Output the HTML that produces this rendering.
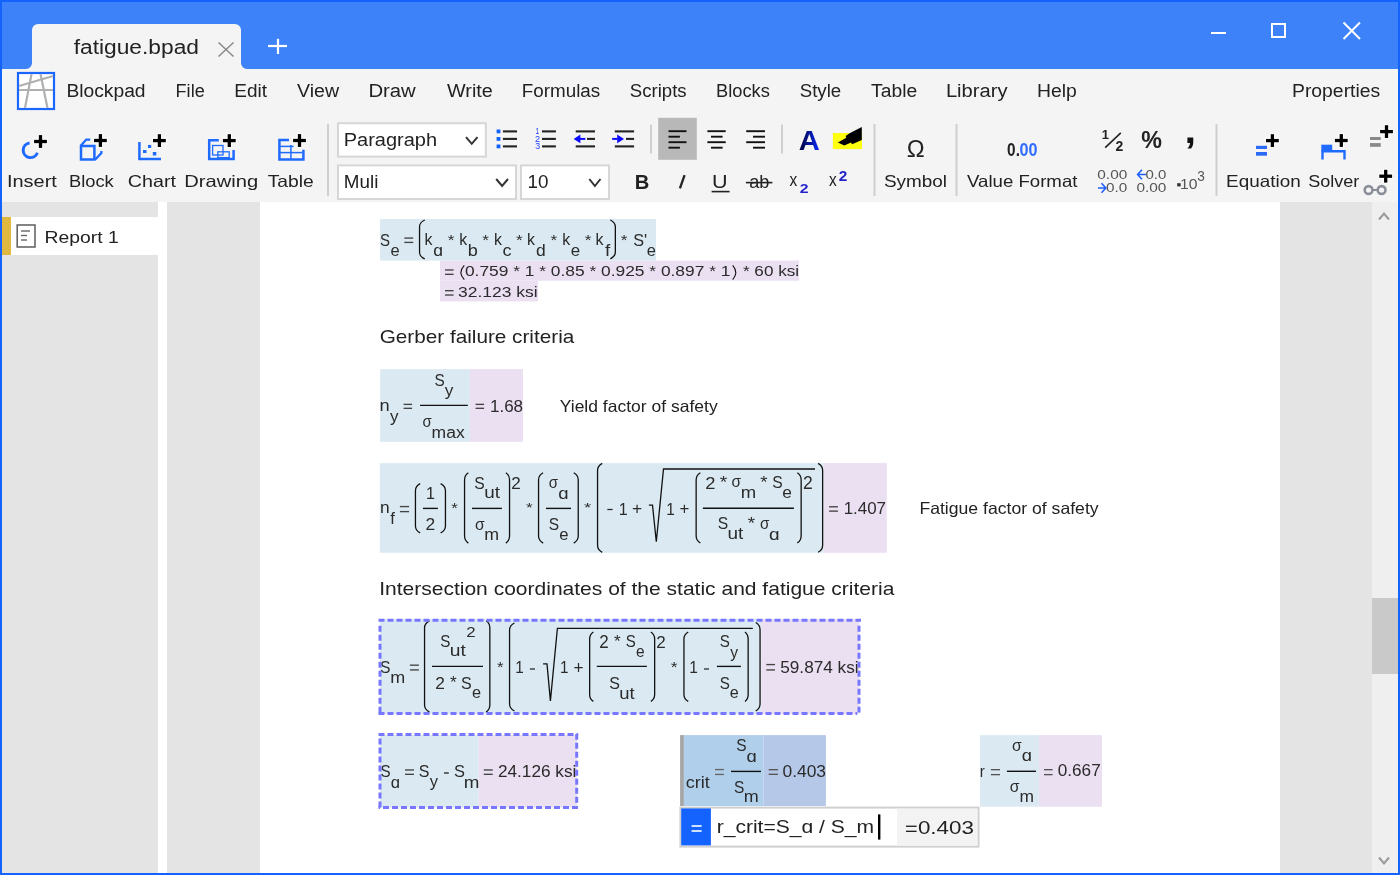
<!DOCTYPE html>
<html><head><meta charset="utf-8"><title>Blockpad - fatigue.bpad</title>
<style>html,body{margin:0;padding:0;width:1400px;height:875px;overflow:hidden;background:#f4f4f4}
svg{display:block;will-change:transform;font-family:"Liberation Sans",sans-serif}</style></head>
<body><svg width="1400" height="875" viewBox="0 0 1400 875" style="white-space:pre">
<rect x="0" y="0" width="1400" height="875" fill="#f4f4f4" />
<rect x="0" y="0" width="1400" height="69" fill="#3e82f9" />
<path d="M26,69 A6,6 0 0 0 32,63 L32,30 A6,6 0 0 1 38,24 L235,24 A6,6 0 0 1 241,30 L241,63 A6,6 0 0 0 247,69 Z" stroke="none" stroke-width="0" fill="#f4f4f4" />
<text x="73.70" y="54.3" font-size="20" fill="#222" textLength="125.28" lengthAdjust="spacingAndGlyphs">fatigue.bpad</text>
<line x1="218.5" y1="42.5" x2="233.5" y2="56.5" stroke="#8c8c8c" stroke-width="1.6" />
<line x1="233.5" y1="42.5" x2="218.5" y2="56.5" stroke="#8c8c8c" stroke-width="1.6" />
<line x1="268" y1="46" x2="287" y2="46" stroke="#fff" stroke-width="2.2" />
<line x1="278" y1="38.8" x2="278" y2="54" stroke="#fff" stroke-width="2.2" />
<line x1="1211" y1="33" x2="1226" y2="33" stroke="#fff" stroke-width="2" />
<rect x="1272" y="24" width="13" height="13" fill="none" stroke="#fff" stroke-width="2"/>
<line x1="1343.5" y1="22.5" x2="1360" y2="39" stroke="#fff" stroke-width="2" />
<line x1="1360" y1="22.5" x2="1343.5" y2="39" stroke="#fff" stroke-width="2" />
<rect x="17" y="72" width="38" height="38" fill="#fff" stroke="none"/>
<rect x="18" y="73" width="36" height="36" fill="none" stroke="#1a66ff" stroke-width="2.2"/>
<line x1="31.5" y1="74" x2="25" y2="108" stroke="#b0b0b0" stroke-width="2.2" />
<line x1="40.5" y1="74" x2="47.5" y2="108" stroke="#b0b0b0" stroke-width="2.2" />
<line x1="19" y1="86" x2="53" y2="76" stroke="#b0b0b0" stroke-width="2.2" />
<line x1="19" y1="90" x2="53" y2="90" stroke="#b0b0b0" stroke-width="2.2" />
<text x="66.40" y="97.1" font-size="18" fill="#222" textLength="79.18" lengthAdjust="spacingAndGlyphs">Blockpad</text>
<text x="175.59" y="97.1" font-size="18" fill="#222" textLength="29.15" lengthAdjust="spacingAndGlyphs">File</text>
<text x="234.22" y="97.1" font-size="18" fill="#222" textLength="32.72" lengthAdjust="spacingAndGlyphs">Edit</text>
<text x="297.00" y="97.1" font-size="18" fill="#222" textLength="42.16" lengthAdjust="spacingAndGlyphs">View</text>
<text x="368.42" y="97.1" font-size="18" fill="#222" textLength="47.34" lengthAdjust="spacingAndGlyphs">Draw</text>
<text x="447.00" y="97.1" font-size="18" fill="#222" textLength="45.80" lengthAdjust="spacingAndGlyphs">Write</text>
<text x="521.83" y="97.1" font-size="18" fill="#222" textLength="78.36" lengthAdjust="spacingAndGlyphs">Formulas</text>
<text x="629.82" y="97.1" font-size="18" fill="#222" textLength="56.86" lengthAdjust="spacingAndGlyphs">Scripts</text>
<text x="715.97" y="97.1" font-size="18" fill="#222" textLength="53.90" lengthAdjust="spacingAndGlyphs">Blocks</text>
<text x="799.72" y="97.1" font-size="18" fill="#222" textLength="41.44" lengthAdjust="spacingAndGlyphs">Style</text>
<text x="871.10" y="97.1" font-size="18" fill="#222" textLength="46.08" lengthAdjust="spacingAndGlyphs">Table</text>
<text x="945.93" y="97.1" font-size="18" fill="#222" textLength="61.57" lengthAdjust="spacingAndGlyphs">Library</text>
<text x="1036.99" y="97.1" font-size="18" fill="#222" textLength="39.80" lengthAdjust="spacingAndGlyphs">Help</text>
<text x="1291.99" y="97.1" font-size="18" fill="#222" textLength="88.22" lengthAdjust="spacingAndGlyphs">Properties</text>
<text x="6.94" y="186.8" font-size="16.5" fill="#222" textLength="49.99" lengthAdjust="spacingAndGlyphs">Insert</text>
<text x="68.97" y="186.8" font-size="16.5" fill="#222" textLength="44.74" lengthAdjust="spacingAndGlyphs">Block</text>
<text x="127.78" y="186.8" font-size="16.5" fill="#222" textLength="48.16" lengthAdjust="spacingAndGlyphs">Chart</text>
<text x="184.23" y="186.8" font-size="16.5" fill="#222" textLength="73.91" lengthAdjust="spacingAndGlyphs">Drawing</text>
<text x="267.70" y="186.8" font-size="16.5" fill="#222" textLength="46.08" lengthAdjust="spacingAndGlyphs">Table</text>
<text x="883.91" y="186.8" font-size="16.5" fill="#222" textLength="63.09" lengthAdjust="spacingAndGlyphs">Symbol</text>
<text x="967.00" y="186.8" font-size="16.5" fill="#222" textLength="110.44" lengthAdjust="spacingAndGlyphs">Value Format</text>
<text x="1226.12" y="186.8" font-size="16.5" fill="#222" textLength="74.54" lengthAdjust="spacingAndGlyphs">Equation</text>
<text x="1308.24" y="186.8" font-size="16.5" fill="#222" textLength="51.15" lengthAdjust="spacingAndGlyphs">Solver</text>
<line x1="328" y1="124" x2="328" y2="196" stroke="#cfcfcf" stroke-width="2" />
<line x1="874.5" y1="124" x2="874.5" y2="196" stroke="#cfcfcf" stroke-width="2" />
<line x1="956.5" y1="124" x2="956.5" y2="196" stroke="#cfcfcf" stroke-width="2" />
<line x1="1216.5" y1="124" x2="1216.5" y2="196" stroke="#cfcfcf" stroke-width="2" />
<line x1="651" y1="124.4" x2="651" y2="153.5" stroke="#cfcfcf" stroke-width="2" />
<line x1="782" y1="124.4" x2="782" y2="153.5" stroke="#cfcfcf" stroke-width="2" />
<rect x="0" y="202" width="1400" height="673" fill="#fff" />
<rect x="2" y="202" width="156" height="671" fill="#e4e4e4" />
<rect x="167" y="202" width="93" height="671" fill="#e4e4e4" />
<rect x="1280" y="202" width="92" height="671" fill="#e4e4e4" />
<rect x="1372" y="202" width="26" height="671" fill="#efefef" />
<rect x="1372" y="598" width="26" height="76" fill="#c9c9c9" />
<path d="M1379,219.5 L1384,213.5 L1389,219.5" stroke="#9a9a9a" stroke-width="2" fill="none" />
<path d="M1379,857.5 L1384,863.5 L1389,857.5" stroke="#9a9a9a" stroke-width="2" fill="none" />
<rect x="2" y="217" width="156" height="38" fill="#fff" />
<rect x="2" y="217" width="9" height="38" fill="#e0b840" />
<rect x="17.2" y="225" width="17.8" height="22" fill="none" stroke="#666" stroke-width="1.6"/>
<line x1="21" y1="231" x2="30" y2="231" stroke="#666" stroke-width="1.4" />
<line x1="21" y1="235.5" x2="27" y2="235.5" stroke="#666" stroke-width="1.4" />
<line x1="21" y1="240" x2="27" y2="240" stroke="#666" stroke-width="1.4" />
<text x="44.49" y="243.1" font-size="17" fill="#222" textLength="74.20" lengthAdjust="spacingAndGlyphs">Report 1</text>
<rect x="1" y="1" width="1398" height="873" fill="none" stroke="#1463ff" stroke-width="2"/>
<path d="M29.6,143.05 A7.3,7.3 0 1 0 37.36,152.8" stroke="#1f6bff" stroke-width="3" fill="none" />
<line x1="33.300000000000004" y1="141.5" x2="47.699999999999996" y2="141.5" stroke="#fff" stroke-width="5.699999999999999" stroke-opacity="0.85"/>
<line x1="40.5" y1="134.29999999999998" x2="40.5" y2="148.70000000000002" stroke="#fff" stroke-width="5.699999999999999" stroke-opacity="0.85"/>
<line x1="34.1" y1="141.5" x2="46.9" y2="141.5" stroke="#000" stroke-width="3.3" />
<line x1="40.5" y1="135.1" x2="40.5" y2="147.9" stroke="#000" stroke-width="3.3" />
<path d="M81,146 L81,159.6 L94.4,159.6 L94.4,146 Z" stroke="#1f6bff" stroke-width="2.5" fill="none" />
<path d="M80.8,145.8 L86.2,139.6 L90.2,139.6" stroke="#1f6bff" stroke-width="2.3" fill="none" />
<path d="M95,159.8 L101.4,153 L101.4,151" stroke="#1f6bff" stroke-width="2.3" fill="none" />
<line x1="93.2" y1="140.5" x2="107.60000000000001" y2="140.5" stroke="#fff" stroke-width="5.699999999999999" stroke-opacity="0.85"/>
<line x1="100.4" y1="133.29999999999998" x2="100.4" y2="147.70000000000002" stroke="#fff" stroke-width="5.699999999999999" stroke-opacity="0.85"/>
<line x1="94.0" y1="140.5" x2="106.80000000000001" y2="140.5" stroke="#000" stroke-width="3.3" />
<line x1="100.4" y1="134.1" x2="100.4" y2="146.9" stroke="#000" stroke-width="3.3" />
<path d="M139.4,142 L139.4,159 L161,159" stroke="#1f6bff" stroke-width="2.5" fill="none" />
<rect x="148" y="144.9" width="3.2" height="3.1" fill="#1f6bff" />
<rect x="143" y="150" width="3.5" height="3" fill="#1f6bff" />
<rect x="152.8" y="152" width="3.5" height="3.5" fill="#1f6bff" />
<line x1="152.2" y1="140.6" x2="166.60000000000002" y2="140.6" stroke="#fff" stroke-width="5.699999999999999" stroke-opacity="0.85"/>
<line x1="159.4" y1="133.39999999999998" x2="159.4" y2="147.8" stroke="#fff" stroke-width="5.699999999999999" stroke-opacity="0.85"/>
<line x1="153.0" y1="140.6" x2="165.8" y2="140.6" stroke="#000" stroke-width="3.3" />
<line x1="159.4" y1="134.2" x2="159.4" y2="147.0" stroke="#000" stroke-width="3.3" />
<path d="M218.8,140.2 L209.2,140.2 L209.2,159 L233.6,159 L233.6,150" stroke="#1f6bff" stroke-width="2.5" fill="none" />
<rect x="212.6" y="145.5" width="10.4" height="9.5" fill="none" stroke="#1f6bff" stroke-width="1.3"/>
<rect x="217.8" y="151.8" width="11.4" height="5.8" fill="none" stroke="#1f6bff" stroke-width="1.3"/>
<line x1="222.1" y1="140.6" x2="236.50000000000003" y2="140.6" stroke="#fff" stroke-width="5.699999999999999" stroke-opacity="0.85"/>
<line x1="229.3" y1="133.39999999999998" x2="229.3" y2="147.8" stroke="#fff" stroke-width="5.699999999999999" stroke-opacity="0.85"/>
<line x1="222.9" y1="140.6" x2="235.70000000000002" y2="140.6" stroke="#000" stroke-width="3.3" />
<line x1="229.3" y1="134.2" x2="229.3" y2="147.0" stroke="#000" stroke-width="3.3" />
<path d="M289,140 L279.4,140 L279.4,159.5 L303.4,159.5 L303.4,149.8" stroke="#1f6bff" stroke-width="2.5" fill="none" />
<line x1="280" y1="146.4" x2="293.6" y2="146.4" stroke="#1f6bff" stroke-width="1.5" />
<line x1="280" y1="152.6" x2="302" y2="152.6" stroke="#1f6bff" stroke-width="1.5" />
<line x1="290.9" y1="145" x2="290.9" y2="159" stroke="#1f6bff" stroke-width="1.5" />
<line x1="292.3" y1="140.5" x2="306.7" y2="140.5" stroke="#fff" stroke-width="5.699999999999999" stroke-opacity="0.85"/>
<line x1="299.5" y1="133.29999999999998" x2="299.5" y2="147.70000000000002" stroke="#fff" stroke-width="5.699999999999999" stroke-opacity="0.85"/>
<line x1="293.1" y1="140.5" x2="305.9" y2="140.5" stroke="#000" stroke-width="3.3" />
<line x1="299.5" y1="134.1" x2="299.5" y2="146.9" stroke="#000" stroke-width="3.3" />
<rect x="338" y="123.2" width="147.8" height="33.4" fill="#fff" stroke="#d6d6d6" stroke-width="2"/>
<rect x="338" y="165.4" width="178" height="33.6" fill="#fff" stroke="#d6d6d6" stroke-width="2"/>
<rect x="521" y="165.4" width="88" height="33.6" fill="#fff" stroke="#d6d6d6" stroke-width="2"/>
<path d="M466,137.2 L471.75,143.8 L477.5,137.2" stroke="#333" stroke-width="2" fill="none" />
<path d="M496.2,179 L502.1,186 L508,179" stroke="#333" stroke-width="2" fill="none" />
<path d="M589.3,179 L594.9,186 L600.5,179" stroke="#333" stroke-width="2" fill="none" />
<text x="343.74" y="145.8" font-size="17.5" fill="#222" textLength="93.39" lengthAdjust="spacingAndGlyphs">Paragraph</text>
<text x="343.83" y="188" font-size="17.5" fill="#222" textLength="34.51" lengthAdjust="spacingAndGlyphs">Muli</text>
<text x="527.52" y="188" font-size="17.5" fill="#222" textLength="20.95" lengthAdjust="spacingAndGlyphs">10</text>
<rect x="496.6" y="129.5" width="3.8" height="3.8" fill="#1060ff" />
<line x1="502.9" y1="131.4" x2="517" y2="131.4" stroke="#222" stroke-width="2.1" />
<line x1="542" y1="131.4" x2="555.9" y2="131.4" stroke="#222" stroke-width="2.1" />
<rect x="496.6" y="137.0" width="3.8" height="3.8" fill="#1060ff" />
<line x1="502.9" y1="138.9" x2="517" y2="138.9" stroke="#222" stroke-width="2.1" />
<line x1="542" y1="138.9" x2="555.9" y2="138.9" stroke="#222" stroke-width="2.1" />
<rect x="496.6" y="144.5" width="3.8" height="3.8" fill="#1060ff" />
<line x1="502.9" y1="146.4" x2="517" y2="146.4" stroke="#222" stroke-width="2.1" />
<line x1="542" y1="146.4" x2="555.9" y2="146.4" stroke="#222" stroke-width="2.1" />
<text x="535.39" y="134.2" font-size="9.39" fill="#2040ff" textLength="3.68" lengthAdjust="spacingAndGlyphs">1</text>
<text x="535.07" y="142.2" font-size="9.67" fill="#2040ff" textLength="5.10" lengthAdjust="spacingAndGlyphs">2</text>
<text x="535.22" y="149.46" font-size="9.18" fill="#2040ff" textLength="4.94" lengthAdjust="spacingAndGlyphs">3</text>
<line x1="575.7" y1="131.4" x2="595" y2="131.4" stroke="#222" stroke-width="2.1" />
<line x1="587" y1="138.9" x2="595" y2="138.9" stroke="#222" stroke-width="2.1" />
<line x1="575.7" y1="146.4" x2="595" y2="146.4" stroke="#222" stroke-width="2.1" />
<path d="M573.6,138.9 L580.4,134.6 L580.4,143.2 Z" stroke="none" stroke-width="0" fill="#0a0aff" />
<line x1="580" y1="138.9" x2="585.4" y2="138.9" stroke="#0a0aff" stroke-width="2" />
<line x1="614.8" y1="131.4" x2="634.1" y2="131.4" stroke="#222" stroke-width="2.1" />
<line x1="626" y1="138.9" x2="634.1" y2="138.9" stroke="#222" stroke-width="2.1" />
<line x1="614.8" y1="146.4" x2="634.1" y2="146.4" stroke="#222" stroke-width="2.1" />
<path d="M624,138.9 L617.2,134.6 L617.2,143.2 Z" stroke="none" stroke-width="0" fill="#0a0aff" />
<line x1="612.2" y1="138.9" x2="617.5" y2="138.9" stroke="#0a0aff" stroke-width="2" />
<rect x="658.2" y="117.8" width="38.6" height="42.0" fill="#b8b8b8" />
<line x1="668.5" y1="131.2" x2="686.5" y2="131.2" stroke="#111" stroke-width="1.9" />
<line x1="707.4" y1="131.2" x2="725.7" y2="131.2" stroke="#111" stroke-width="1.9" />
<line x1="746.2" y1="131.2" x2="765" y2="131.2" stroke="#111" stroke-width="1.9" />
<line x1="668.5" y1="136.7" x2="679.9" y2="136.7" stroke="#111" stroke-width="1.9" />
<line x1="711" y1="136.7" x2="722.6" y2="136.7" stroke="#111" stroke-width="1.9" />
<line x1="753" y1="136.7" x2="765" y2="136.7" stroke="#111" stroke-width="1.9" />
<line x1="668.5" y1="142.2" x2="686.5" y2="142.2" stroke="#111" stroke-width="1.9" />
<line x1="707.4" y1="142.2" x2="725.7" y2="142.2" stroke="#111" stroke-width="1.9" />
<line x1="746.2" y1="142.2" x2="765" y2="142.2" stroke="#111" stroke-width="1.9" />
<line x1="668.5" y1="147.7" x2="679.9" y2="147.7" stroke="#111" stroke-width="1.9" />
<line x1="711" y1="147.7" x2="722.6" y2="147.7" stroke="#111" stroke-width="1.9" />
<line x1="753" y1="147.7" x2="765" y2="147.7" stroke="#111" stroke-width="1.9" />
<defs><linearGradient id="ga" x1="0" x2="1" y1="0" y2="0"><stop offset="0" stop-color="#000033"/><stop offset="1" stop-color="#0a2cff"/></linearGradient></defs>
<text x="798.84" y="149.9" font-size="27.31" fill="url(#ga)" font-weight="bold" textLength="21.11" lengthAdjust="spacingAndGlyphs">A</text>
<rect x="832.9" y="133" width="29.1" height="16.1" fill="#ffff10" />
<path d="M861.8,127.1 L861.8,139.9 L852.1,144.3 L851,142.5 L844.3,145.4 L837.9,142.5 L846.3,137.7 L845.6,135.9 L849.6,133.3 Z" stroke="none" stroke-width="0" fill="#000" />
<text x="634.84" y="188.6" font-size="19.48" fill="#222" font-weight="bold" textLength="14.56" lengthAdjust="spacingAndGlyphs">B</text>
<line x1="684.6" y1="175.2" x2="679.9" y2="188.4" stroke="#222" stroke-width="2.3" />
<text x="711.95" y="188.3" font-size="19.06" fill="#222" textLength="15.57" lengthAdjust="spacingAndGlyphs">U</text>
<line x1="711.6" y1="191.6" x2="729.6" y2="191.6" stroke="#222" stroke-width="1.6" />
<text x="749.23" y="188.31" font-size="18.27" fill="#222" textLength="20.20" lengthAdjust="spacingAndGlyphs">ab</text>
<line x1="745.9" y1="182.6" x2="772.4" y2="182.6" stroke="#222" stroke-width="1.6" />
<text x="789.60" y="186.0" font-size="17.69" fill="#222" textLength="7.70" lengthAdjust="spacingAndGlyphs">x</text>
<text x="799.71" y="192.9" font-size="13.51" fill="#2222cc" font-weight="bold" textLength="8.79" lengthAdjust="spacingAndGlyphs">2</text>
<text x="829.00" y="186.0" font-size="17.69" fill="#222" textLength="7.70" lengthAdjust="spacingAndGlyphs">x</text>
<text x="838.82" y="181.2" font-size="13.94" fill="#2222cc" font-weight="bold" textLength="8.56" lengthAdjust="spacingAndGlyphs">2</text>
<text x="906.85" y="157.2" font-size="24.32" fill="#222" textLength="17.94" lengthAdjust="spacingAndGlyphs">Ω</text>
<text x="1007.12" y="156.22" font-size="18.09" fill="#222" font-weight="bold" textLength="12.78" lengthAdjust="spacingAndGlyphs">0.</text>
<text x="1019.60" y="156.22" font-size="18.09" fill="#2f6bff" font-weight="bold" textLength="17.96" lengthAdjust="spacingAndGlyphs">00</text>
<text x="1101.79" y="138.9" font-size="13.51" fill="#222" font-weight="bold" textLength="7.24" lengthAdjust="spacingAndGlyphs">1</text>
<line x1="1105.2" y1="147.6" x2="1120.8" y2="132.9" stroke="#222" stroke-width="1.6" />
<text x="1115.56" y="150.6" font-size="14.08" fill="#222" font-weight="bold" textLength="7.79" lengthAdjust="spacingAndGlyphs">2</text>
<text x="1141.24" y="147.62" font-size="24.07" fill="#222" font-weight="bold" textLength="20.69" lengthAdjust="spacingAndGlyphs">%</text>
<text x="1184.60" y="143.05" font-size="37.44" fill="#111" font-weight="bold" textLength="11.56" lengthAdjust="spacingAndGlyphs">,</text>
<text x="1097.32" y="178.71" font-size="12.1" fill="#555" textLength="29.96" lengthAdjust="spacingAndGlyphs">0.00</text>
<text x="1106.02" y="192.1" font-size="12.66" fill="#555" textLength="21.26" lengthAdjust="spacingAndGlyphs">0.0</text>
<path d="M1098,188 L1105.5,188 M1101.5,183.3 L1105.8,188 L1101.5,192.7" stroke="#2060ff" stroke-width="1.6" fill="none" />
<text x="1145.53" y="178.71" font-size="12.1" fill="#555" textLength="20.84" lengthAdjust="spacingAndGlyphs">0.0</text>
<text x="1136.42" y="192.1" font-size="12.66" fill="#555" textLength="29.96" lengthAdjust="spacingAndGlyphs">0.00</text>
<path d="M1146,174.5 L1138,174.5 M1142,169.8 L1137.6,174.5 L1142,179.2" stroke="#2060ff" stroke-width="1.6" fill="none" />
<rect x="1177.2" y="183.2" width="3.5" height="3.2" fill="#333" />
<text x="1180.12" y="189.06" font-size="15.17" fill="#555" textLength="17.47" lengthAdjust="spacingAndGlyphs">10</text>
<text x="1197.17" y="180.78" font-size="13.91" fill="#555" textLength="7.58" lengthAdjust="spacingAndGlyphs">3</text>
<rect x="1256" y="145.8" width="11" height="3.2" fill="#2a6af5" />
<rect x="1256" y="152" width="11" height="3.7" fill="#2a6af5" />
<line x1="1265.2" y1="140.6" x2="1279.6000000000001" y2="140.6" stroke="#fff" stroke-width="5.699999999999999" stroke-opacity="0.85"/>
<line x1="1272.4" y1="133.39999999999998" x2="1272.4" y2="147.8" stroke="#fff" stroke-width="5.699999999999999" stroke-opacity="0.85"/>
<line x1="1266.0" y1="140.6" x2="1278.8000000000002" y2="140.6" stroke="#000" stroke-width="3.3" />
<line x1="1272.4" y1="134.2" x2="1272.4" y2="147.0" stroke="#000" stroke-width="3.3" />
<rect x="1321.3" y="144.7" width="10.9" height="6.8" fill="#1f6bff" />
<path d="M1322.5,159.4 L1322.5,151.2 L1344.5,151.2 L1344.5,159.4" stroke="#1f6bff" stroke-width="2.4" fill="none" />
<line x1="1334.1" y1="140.5" x2="1348.5" y2="140.5" stroke="#fff" stroke-width="5.699999999999999" stroke-opacity="0.85"/>
<line x1="1341.3" y1="133.29999999999998" x2="1341.3" y2="147.70000000000002" stroke="#fff" stroke-width="5.699999999999999" stroke-opacity="0.85"/>
<line x1="1334.8999999999999" y1="140.5" x2="1347.7" y2="140.5" stroke="#000" stroke-width="3.3" />
<line x1="1341.3" y1="134.1" x2="1341.3" y2="146.9" stroke="#000" stroke-width="3.3" />
<rect x="1370" y="137" width="10.7" height="3" fill="#888" />
<rect x="1370" y="143.1" width="10.7" height="3.7" fill="#888" />
<line x1="1379.3" y1="131.6" x2="1393.7" y2="131.6" stroke="#fff" stroke-width="5.699999999999999" stroke-opacity="0.85"/>
<line x1="1386.5" y1="124.39999999999999" x2="1386.5" y2="138.8" stroke="#fff" stroke-width="5.699999999999999" stroke-opacity="0.85"/>
<line x1="1380.1" y1="131.6" x2="1392.9" y2="131.6" stroke="#000" stroke-width="3.3" />
<line x1="1386.5" y1="125.19999999999999" x2="1386.5" y2="138.0" stroke="#000" stroke-width="3.3" />
<circle cx="1368.6" cy="190" r="3.9" fill="none" stroke="#8a8f99" stroke-width="2.6"/><circle cx="1381.6" cy="190" r="3.9" fill="none" stroke="#8a8f99" stroke-width="2.6"/>
<line x1="1372.5" y1="190" x2="1378" y2="190" stroke="#8a8f99" stroke-width="2" />
<line x1="1378.5" y1="176.2" x2="1392.9" y2="176.2" stroke="#fff" stroke-width="5.699999999999999" stroke-opacity="0.85"/>
<line x1="1385.7" y1="168.99999999999997" x2="1385.7" y2="183.4" stroke="#fff" stroke-width="5.699999999999999" stroke-opacity="0.85"/>
<line x1="1379.3" y1="176.2" x2="1392.1000000000001" y2="176.2" stroke="#000" stroke-width="3.3" />
<line x1="1385.7" y1="169.79999999999998" x2="1385.7" y2="182.6" stroke="#000" stroke-width="3.3" />
<rect x="380" y="219" width="276" height="41.6" fill="#dbeaf2" />
<rect x="440" y="260.6" width="359" height="20.1" fill="#ebdff2" />
<rect x="440" y="280.7" width="98" height="20.7" fill="#ebdff2" />
<text x="380.03" y="245.6" font-size="16.5" fill="#2b2b2b" textLength="10.00" lengthAdjust="spacingAndGlyphs">S</text>
<text x="390.48" y="256.45" font-size="16" fill="#2b2b2b" textLength="9.19" lengthAdjust="spacingAndGlyphs">e</text>
<rect x="404.3" y="237.4" width="8.9" height="1.35" fill="#444" />
<rect x="404.3" y="241.75" width="8.9" height="1.35" fill="#444" />
<path d="M424.75,220 C419.54999999999995,222.45 419.54999999999995,224.9 419.54999999999995,227 L419.54999999999995,251.89999999999998 C419.54999999999995,253.99999999999997 419.54999999999995,256.45 424.75,258.9" stroke="#111" stroke-width="1.3" fill="none" />
<text x="424.41" y="245.15" font-size="16" fill="#2b2b2b" textLength="7.94" lengthAdjust="spacingAndGlyphs">k</text>
<text x="433.25" y="255.7" font-size="16" fill="#2b2b2b" textLength="9.73" lengthAdjust="spacingAndGlyphs">ɑ</text>
<text x="459.31" y="245.15" font-size="16" fill="#2b2b2b" textLength="7.94" lengthAdjust="spacingAndGlyphs">k</text>
<text x="467.77" y="255.7" font-size="16" fill="#2b2b2b" textLength="10.06" lengthAdjust="spacingAndGlyphs">b</text>
<text x="493.91" y="245.15" font-size="16" fill="#2b2b2b" textLength="7.94" lengthAdjust="spacingAndGlyphs">k</text>
<text x="502.53" y="255.7" font-size="16" fill="#2b2b2b" textLength="9.05" lengthAdjust="spacingAndGlyphs">c</text>
<text x="527.01" y="245.15" font-size="16" fill="#2b2b2b" textLength="7.94" lengthAdjust="spacingAndGlyphs">k</text>
<text x="536.05" y="255.7" font-size="16" fill="#2b2b2b" textLength="9.73" lengthAdjust="spacingAndGlyphs">d</text>
<text x="562.21" y="245.15" font-size="16" fill="#2b2b2b" textLength="7.94" lengthAdjust="spacingAndGlyphs">k</text>
<text x="570.87" y="255.7" font-size="16" fill="#2b2b2b" textLength="9.42" lengthAdjust="spacingAndGlyphs">e</text>
<text x="595.61" y="245.15" font-size="16" fill="#2b2b2b" textLength="7.94" lengthAdjust="spacingAndGlyphs">k</text>
<text x="605.00" y="255.7" font-size="16" fill="#2b2b2b" textLength="5.24" lengthAdjust="spacingAndGlyphs">f</text>
<text x="447.73" y="245.29" font-size="15.2" fill="#2b2b2b" textLength="6.71" lengthAdjust="spacingAndGlyphs">*</text>
<text x="482.33" y="245.29" font-size="15.2" fill="#2b2b2b" textLength="6.71" lengthAdjust="spacingAndGlyphs">*</text>
<text x="516.03" y="245.29" font-size="15.2" fill="#2b2b2b" textLength="6.71" lengthAdjust="spacingAndGlyphs">*</text>
<text x="550.63" y="245.29" font-size="15.2" fill="#2b2b2b" textLength="6.71" lengthAdjust="spacingAndGlyphs">*</text>
<text x="584.73" y="245.29" font-size="15.2" fill="#2b2b2b" textLength="6.71" lengthAdjust="spacingAndGlyphs">*</text>
<text x="620.73" y="245.29" font-size="15.2" fill="#2b2b2b" textLength="6.71" lengthAdjust="spacingAndGlyphs">*</text>
<path d="M610.35,220 C615.35,222.45 615.35,224.9 615.35,227 L615.35,251.89999999999998 C615.35,253.99999999999997 615.35,256.45 610.35,258.9" stroke="#111" stroke-width="1.3" fill="none" />
<text x="633.19" y="245.6" font-size="16.5" fill="#2b2b2b" textLength="13.92" lengthAdjust="spacingAndGlyphs">S'</text>
<text x="646.88" y="256.45" font-size="16" fill="#2b2b2b" textLength="9.19" lengthAdjust="spacingAndGlyphs">e</text>
<rect x="445" y="269.3" width="8.6" height="1.35" fill="#444" />
<rect x="445" y="273.65" width="8.6" height="1.35" fill="#444" />
<path d="M464.3,265.3 Q457.6,272.45 464.3,279.6" stroke="#111" stroke-width="1.1" fill="none" />
<text x="464.96" y="276.4" font-size="15.5" fill="#2b2b2b" textLength="265.45" lengthAdjust="spacingAndGlyphs">0.759 * 1 * 0.85 * 0.925 * 0.897 * 1</text>
<path d="M732.7,265.3 Q738.8,272.45 732.7,279.6" stroke="#111" stroke-width="1.1" fill="none" />
<text x="742.93" y="276.4" font-size="15.5" fill="#2b2b2b" textLength="56.20" lengthAdjust="spacingAndGlyphs">* 60 ksi</text>
<rect x="445" y="290" width="8.6" height="1.35" fill="#444" />
<rect x="445" y="294.34999999999997" width="8.6" height="1.35" fill="#444" />
<text x="458.06" y="297.1" font-size="15.5" fill="#2b2b2b" textLength="79.49" lengthAdjust="spacingAndGlyphs">32.123 ksi</text>
<text x="379.73" y="343.3" font-size="19" fill="#222" textLength="194.54" lengthAdjust="spacingAndGlyphs">Gerber failure criteria</text>
<rect x="380.1" y="369.1" width="89.8" height="72.7" fill="#dbeaf2" />
<rect x="469.9" y="369.1" width="53.1" height="72.7" fill="#ebdff2" />
<text x="379.56" y="411.35" font-size="16" fill="#2b2b2b" textLength="10.17" lengthAdjust="spacingAndGlyphs">n</text>
<text x="389.90" y="421.9" font-size="16" fill="#2b2b2b" textLength="8.50" lengthAdjust="spacingAndGlyphs">y</text>
<rect x="403.6" y="403.7" width="8.5" height="1.35" fill="#444" />
<rect x="403.6" y="407.65" width="8.5" height="1.35" fill="#444" />
<line x1="420.1" y1="405.4" x2="467.8" y2="405.4" stroke="#111" stroke-width="1.4" />
<text x="434.52" y="386.2" font-size="16.5" fill="#2b2b2b" textLength="10.22" lengthAdjust="spacingAndGlyphs">S</text>
<text x="444.70" y="395.9" font-size="16" fill="#2b2b2b" textLength="8.60" lengthAdjust="spacingAndGlyphs">y</text>
<text x="422.54" y="427.3" font-size="16" fill="#2b2b2b" textLength="9.18" lengthAdjust="spacingAndGlyphs">σ</text>
<text x="431.61" y="437.65" font-size="16" fill="#2b2b2b" textLength="33.09" lengthAdjust="spacingAndGlyphs">max</text>
<rect x="475.6" y="403.7" width="8.5" height="1.35" fill="#444" />
<rect x="475.6" y="407.65" width="8.5" height="1.35" fill="#444" />
<text x="489.94" y="411.55" font-size="16" fill="#2b2b2b" textLength="33.16" lengthAdjust="spacingAndGlyphs">1.68</text>
<text x="559.73" y="412.3" font-size="16.5" fill="#222" textLength="157.97" lengthAdjust="spacingAndGlyphs">Yield factor of safety</text>
<rect x="379.8" y="463.1" width="443.8" height="89.7" fill="#dbeaf2" />
<rect x="823.6" y="463.1" width="63.2" height="89.7" fill="#ebdff2" />
<text x="380.01" y="513.35" font-size="16" fill="#2b2b2b" textLength="9.66" lengthAdjust="spacingAndGlyphs">n</text>
<text x="390.30" y="524.2" font-size="16.89" fill="#2b2b2b" textLength="4.64" lengthAdjust="spacingAndGlyphs">f</text>
<rect x="399.9" y="505.9" width="9.2" height="1.35" fill="#444" />
<rect x="399.9" y="510.94999999999993" width="9.2" height="1.35" fill="#444" />
<path d="M420.15000000000003,483.7 C415.45,486.15 415.45,488.59999999999997 415.45,490.7 L415.45,525.9 C415.45,528.0 415.45,530.4499999999999 420.15000000000003,532.9" stroke="#111" stroke-width="1.3" fill="none" />
<text x="425.89" y="499.1" font-size="16.64" fill="#2b2b2b" textLength="8.96" lengthAdjust="spacingAndGlyphs">1</text>
<line x1="423" y1="508.4" x2="437.9" y2="508.4" stroke="#111" stroke-width="1.4" />
<text x="425.48" y="529.9" font-size="16.36" fill="#2b2b2b" textLength="9.73" lengthAdjust="spacingAndGlyphs">2</text>
<path d="M440.65,483.7 C445.45000000000005,486.15 445.45000000000005,488.59999999999997 445.45000000000005,490.7 L445.45000000000005,525.9 C445.45000000000005,528.0 445.45000000000005,530.4499999999999 440.65,532.9" stroke="#111" stroke-width="1.3" fill="none" />
<text x="451.33" y="512.71" font-size="14.67" fill="#2b2b2b" textLength="6.61" lengthAdjust="spacingAndGlyphs">*</text>
<path d="M468.35,472.7 C464.54999999999995,475.15 464.54999999999995,477.59999999999997 464.54999999999995,479.7 L464.54999999999995,536.1 C464.54999999999995,538.2 464.54999999999995,540.65 468.35,543.1" stroke="#111" stroke-width="1.3" fill="none" />
<text x="474.21" y="488.5" font-size="16.5" fill="#2b2b2b" textLength="10.45" lengthAdjust="spacingAndGlyphs">S</text>
<text x="484.22" y="497.9" font-size="16" fill="#2b2b2b" textLength="15.71" lengthAdjust="spacingAndGlyphs">ut</text>
<line x1="472" y1="508.4" x2="501.9" y2="508.4" stroke="#111" stroke-width="1.4" />
<text x="474.91" y="529.7" font-size="16" fill="#2b2b2b" textLength="9.71" lengthAdjust="spacingAndGlyphs">σ</text>
<text x="484.29" y="539.95" font-size="16" fill="#2b2b2b" textLength="14.83" lengthAdjust="spacingAndGlyphs">m</text>
<path d="M505.84999999999997,472.7 C509.55,475.15 509.55,477.59999999999997 509.55,479.7 L509.55,536.1 C509.55,538.2 509.55,540.65 505.84999999999997,543.1" stroke="#111" stroke-width="1.3" fill="none" />
<text x="511.30" y="488.7" font-size="16.21" fill="#2b2b2b" textLength="9.49" lengthAdjust="spacingAndGlyphs">2</text>
<text x="525.93" y="511.96" font-size="13.6" fill="#2b2b2b" textLength="6.71" lengthAdjust="spacingAndGlyphs">*</text>
<path d="M543.15,472.7 C538.55,475.15 538.55,477.59999999999997 538.55,479.7 L538.55,536.1 C538.55,538.2 538.55,540.65 543.15,543.1" stroke="#111" stroke-width="1.3" fill="none" />
<text x="548.83" y="487.6" font-size="16" fill="#2b2b2b" textLength="9.29" lengthAdjust="spacingAndGlyphs">σ</text>
<text x="558.32" y="498.85" font-size="16" fill="#2b2b2b" textLength="10.32" lengthAdjust="spacingAndGlyphs">ɑ</text>
<line x1="546" y1="508.4" x2="571" y2="508.4" stroke="#111" stroke-width="1.4" />
<text x="548.82" y="530.0" font-size="16.5" fill="#2b2b2b" textLength="10.33" lengthAdjust="spacingAndGlyphs">S</text>
<text x="559.28" y="539.95" font-size="16" fill="#2b2b2b" textLength="9.30" lengthAdjust="spacingAndGlyphs">e</text>
<path d="M573.75,472.7 C578.25,475.15 578.25,477.59999999999997 578.25,479.7 L578.25,536.1 C578.25,538.2 578.25,540.65 573.75,543.1" stroke="#111" stroke-width="1.3" fill="none" />
<text x="584.01" y="511.96" font-size="13.6" fill="#2b2b2b" textLength="7.15" lengthAdjust="spacingAndGlyphs">*</text>
<path d="M602.25,463.4 C597.55,465.84999999999997 597.55,468.29999999999995 597.55,470.4 L597.55,545.3 C597.55,547.4 597.55,549.8499999999999 602.25,552.3" stroke="#111" stroke-width="1.3" fill="none" />
<line x1="607.3" y1="509.5" x2="612.6" y2="509.5" stroke="#2b2b2b" stroke-width="1.3" />
<text x="618.69" y="514.6" font-size="17.35" fill="#2b2b2b" textLength="8.96" lengthAdjust="spacingAndGlyphs">1</text>
<text x="632.08" y="514.3" font-size="16.6" fill="#2b2b2b" textLength="10.16" lengthAdjust="spacingAndGlyphs">+</text>
<path d="M648.9,505.2 L652.5,505.2 L656.3,541.8 L663.5,469 L815,469" stroke="#111" stroke-width="1.3" fill="none" />
<text x="666.23" y="514.6" font-size="17.35" fill="#2b2b2b" textLength="8.59" lengthAdjust="spacingAndGlyphs">1</text>
<text x="679.61" y="514.3" font-size="16.6" fill="#2b2b2b" textLength="9.81" lengthAdjust="spacingAndGlyphs">+</text>
<path d="M700.35,472.8 C696.15,475.25 696.15,477.7 696.15,479.8 L696.15,535.9 C696.15,538.0 696.15,540.4499999999999 700.35,542.9" stroke="#111" stroke-width="1.3" fill="none" />
<text x="705.24" y="488.6" font-size="17.21" fill="#2b2b2b" textLength="10.20" lengthAdjust="spacingAndGlyphs">2</text>
<text x="719.80" y="487.6" font-size="17.07" fill="#2b2b2b" textLength="7.47" lengthAdjust="spacingAndGlyphs">*</text>
<text x="731.62" y="487.3" font-size="16" fill="#2b2b2b" textLength="9.50" lengthAdjust="spacingAndGlyphs">σ</text>
<text x="740.74" y="498.25" font-size="16" fill="#2b2b2b" textLength="15.41" lengthAdjust="spacingAndGlyphs">m</text>
<text x="760.21" y="487.6" font-size="17.07" fill="#2b2b2b" textLength="7.26" lengthAdjust="spacingAndGlyphs">*</text>
<text x="772.31" y="487.9" font-size="16.5" fill="#2b2b2b" textLength="10.45" lengthAdjust="spacingAndGlyphs">S</text>
<text x="782.16" y="498.25" font-size="16" fill="#2b2b2b" textLength="9.64" lengthAdjust="spacingAndGlyphs">e</text>
<line x1="702.9" y1="508.3" x2="793.9" y2="508.3" stroke="#111" stroke-width="1.4" />
<text x="717.71" y="529.4" font-size="16.5" fill="#2b2b2b" textLength="10.45" lengthAdjust="spacingAndGlyphs">S</text>
<text x="727.41" y="539.0" font-size="16" fill="#2b2b2b" textLength="15.82" lengthAdjust="spacingAndGlyphs">ut</text>
<text x="747.80" y="529.09" font-size="17.33" fill="#2b2b2b" textLength="7.36" lengthAdjust="spacingAndGlyphs">*</text>
<text x="760.02" y="529.1" font-size="16" fill="#2b2b2b" textLength="9.39" lengthAdjust="spacingAndGlyphs">σ</text>
<text x="769.11" y="539.55" font-size="16" fill="#2b2b2b" textLength="10.56" lengthAdjust="spacingAndGlyphs">ɑ</text>
<path d="M797.35,472.8 C801.15,475.25 801.15,477.7 801.15,479.8 L801.15,535.9 C801.15,538.0 801.15,540.4499999999999 797.35,542.9" stroke="#111" stroke-width="1.3" fill="none" />
<text x="802.98" y="489.0" font-size="18.49" fill="#2b2b2b" textLength="9.73" lengthAdjust="spacingAndGlyphs">2</text>
<path d="M818.15,463.4 C822.65,465.84999999999997 822.65,468.29999999999995 822.65,470.4 L822.65,545.3 C822.65,547.4 822.65,549.8499999999999 818.15,552.3" stroke="#111" stroke-width="1.3" fill="none" />
<rect x="829.1" y="506.1" width="8.8" height="1.35" fill="#444" />
<rect x="829.1" y="510.45" width="8.8" height="1.35" fill="#444" />
<text x="843.64" y="514.03" font-size="17.11" fill="#2b2b2b" textLength="42.34" lengthAdjust="spacingAndGlyphs">1.407</text>
<text x="919.42" y="514.3" font-size="16.5" fill="#222" textLength="179.18" lengthAdjust="spacingAndGlyphs">Fatigue factor of safety</text>
<text x="379.16" y="595" font-size="19" fill="#222" textLength="515.21" lengthAdjust="spacingAndGlyphs">Intersection coordinates of the static and fatigue criteria</text>
<rect x="380" y="619" width="381.2" height="95" fill="#dbeaf2" />
<rect x="761.2" y="619" width="98.3" height="95" fill="#ebdff2" />
<text x="380.01" y="673.0" font-size="16.5" fill="#2b2b2b" textLength="10.45" lengthAdjust="spacingAndGlyphs">S</text>
<text x="390.28" y="682.75" font-size="16" fill="#2b2b2b" textLength="14.95" lengthAdjust="spacingAndGlyphs">m</text>
<rect x="409.9" y="664.5" width="9.0" height="1.35" fill="#444" />
<rect x="409.9" y="669.25" width="9.0" height="1.35" fill="#444" />
<path d="M429.45000000000005,620.8 C424.54999999999995,623.25 424.54999999999995,625.6999999999999 424.54999999999995,627.8 L424.54999999999995,705.1 C424.54999999999995,707.2 424.54999999999995,709.65 429.45000000000005,712.1" stroke="#111" stroke-width="1.3" fill="none" />
<text x="440.23" y="647.0" font-size="16.5" fill="#2b2b2b" textLength="10.11" lengthAdjust="spacingAndGlyphs">S</text>
<text x="449.80" y="655.9" font-size="16" fill="#2b2b2b" textLength="16.04" lengthAdjust="spacingAndGlyphs">ut</text>
<text x="466.21" y="637.0" font-size="15.08" fill="#2b2b2b" textLength="9.37" lengthAdjust="spacingAndGlyphs">2</text>
<line x1="432" y1="666.4" x2="483" y2="666.4" stroke="#111" stroke-width="1.4" />
<text x="435.19" y="688.8" font-size="16.21" fill="#2b2b2b" textLength="9.61" lengthAdjust="spacingAndGlyphs">2</text>
<text x="449.93" y="688.43" font-size="16.53" fill="#2b2b2b" textLength="6.71" lengthAdjust="spacingAndGlyphs">*</text>
<text x="460.90" y="689.0" font-size="16.5" fill="#2b2b2b" textLength="10.67" lengthAdjust="spacingAndGlyphs">S</text>
<text x="472.09" y="698.45" font-size="16" fill="#2b2b2b" textLength="9.07" lengthAdjust="spacingAndGlyphs">e</text>
<path d="M486.15,620.8 C489.85,623.25 489.85,625.6999999999999 489.85,627.8 L489.85,705.1 C489.85,707.2 489.85,709.65 486.15,712.1" stroke="#111" stroke-width="1.3" fill="none" />
<text x="497.03" y="671.6" font-size="14.93" fill="#2b2b2b" textLength="6.61" lengthAdjust="spacingAndGlyphs">*</text>
<path d="M514.45,623 C509.54999999999995,625.45 509.54999999999995,627.9 509.54999999999995,630 L509.54999999999995,704 C509.54999999999995,706.1 509.54999999999995,708.55 514.45,711" stroke="#111" stroke-width="1.3" fill="none" />
<text x="515.25" y="673.4" font-size="16.64" fill="#2b2b2b" textLength="8.47" lengthAdjust="spacingAndGlyphs">1</text>
<line x1="529.9" y1="669" x2="535" y2="669" stroke="#2b2b2b" stroke-width="1.3" />
<path d="M543.1,663.9 L547,663.9 L550.4,700.9 L557.4,628.3 L752.8,628.3" stroke="#111" stroke-width="1.3" fill="none" />
<text x="560.05" y="673.4" font-size="16.64" fill="#2b2b2b" textLength="8.47" lengthAdjust="spacingAndGlyphs">1</text>
<text x="573.39" y="673.78" font-size="19.0" fill="#2b2b2b" textLength="10.04" lengthAdjust="spacingAndGlyphs">+</text>
<path d="M593.35,632 C589.65,634.45 589.65,636.9 589.65,639 L589.65,694.4 C589.65,696.5 589.65,698.9499999999999 593.35,701.4" stroke="#111" stroke-width="1.3" fill="none" />
<text x="599.20" y="647.7" font-size="17.49" fill="#2b2b2b" textLength="9.49" lengthAdjust="spacingAndGlyphs">2</text>
<text x="613.93" y="646.84" font-size="16.27" fill="#2b2b2b" textLength="6.61" lengthAdjust="spacingAndGlyphs">*</text>
<text x="625.73" y="647.0" font-size="16.5" fill="#2b2b2b" textLength="10.00" lengthAdjust="spacingAndGlyphs">S</text>
<text x="636.12" y="656.95" font-size="16" fill="#2b2b2b" textLength="8.61" lengthAdjust="spacingAndGlyphs">e</text>
<line x1="596.8" y1="666.4" x2="646.9" y2="666.4" stroke="#111" stroke-width="1.4" />
<text x="609.20" y="689.0" font-size="16.5" fill="#2b2b2b" textLength="10.67" lengthAdjust="spacingAndGlyphs">S</text>
<text x="619.15" y="698.5" font-size="16" fill="#2b2b2b" textLength="15.39" lengthAdjust="spacingAndGlyphs">ut</text>
<path d="M650.85,632 C654.65,634.45 654.65,636.9 654.65,639 L654.65,694.4 C654.65,696.5 654.65,698.9499999999999 650.85,701.4" stroke="#111" stroke-width="1.3" fill="none" />
<text x="656.20" y="647.7" font-size="16.78" fill="#2b2b2b" textLength="9.49" lengthAdjust="spacingAndGlyphs">2</text>
<text x="670.73" y="671.6" font-size="14.93" fill="#2b2b2b" textLength="6.82" lengthAdjust="spacingAndGlyphs">*</text>
<path d="M688.25,632 C683.9499999999999,634.45 683.9499999999999,636.9 683.9499999999999,639 L683.9499999999999,694.4 C683.9499999999999,696.5 683.9499999999999,698.9499999999999 688.25,701.4" stroke="#111" stroke-width="1.3" fill="none" />
<text x="689.33" y="673.1" font-size="16.21" fill="#2b2b2b" textLength="8.59" lengthAdjust="spacingAndGlyphs">1</text>
<line x1="704" y1="669" x2="709" y2="669" stroke="#2b2b2b" stroke-width="1.3" />
<line x1="716.9" y1="666.4" x2="740.9" y2="666.4" stroke="#111" stroke-width="1.4" />
<text x="719.73" y="647.0" font-size="16.5" fill="#2b2b2b" textLength="10.11" lengthAdjust="spacingAndGlyphs">S</text>
<text x="730.30" y="657.9" font-size="16" fill="#2b2b2b" textLength="7.80" lengthAdjust="spacingAndGlyphs">y</text>
<text x="719.73" y="689.0" font-size="16.5" fill="#2b2b2b" textLength="10.11" lengthAdjust="spacingAndGlyphs">S</text>
<text x="729.80" y="698.45" font-size="16" fill="#2b2b2b" textLength="8.96" lengthAdjust="spacingAndGlyphs">e</text>
<path d="M744.9499999999999,632 C748.15,634.45 748.15,636.9 748.15,639 L748.15,694.4 C748.15,696.5 748.15,698.9499999999999 744.9499999999999,701.4" stroke="#111" stroke-width="1.3" fill="none" />
<path d="M755.75,622.5 C760.0500000000001,624.95 760.0500000000001,627.4 760.0500000000001,629.5 L760.0500000000001,704 C760.0500000000001,706.1 760.0500000000001,708.55 755.75,711" stroke="#111" stroke-width="1.3" fill="none" />
<rect x="766.3" y="663.9" width="8.7" height="1.35" fill="#444" />
<rect x="766.3" y="669.25" width="8.7" height="1.35" fill="#444" />
<text x="780.26" y="672.84" font-size="16.67" fill="#2b2b2b" textLength="78.37" lengthAdjust="spacingAndGlyphs">59.874 ksi</text>
<line x1="378.5" y1="620.3" x2="861" y2="620.3" stroke="#7777ff" stroke-width="3" stroke-dasharray="6 3"/>
<line x1="380" y1="625.8" x2="380" y2="715" stroke="#7777ff" stroke-width="3" stroke-dasharray="6 3"/>
<line x1="859" y1="625.8" x2="859" y2="712.4" stroke="#7777ff" stroke-width="3" stroke-dasharray="6 3"/>
<line x1="378.5" y1="713.6" x2="857.2" y2="713.6" stroke="#7777ff" stroke-width="3" stroke-dasharray="6 3"/>
<rect x="380" y="735" width="98.5" height="72.5" fill="#dbeaf2" />
<rect x="478.5" y="735" width="98.5" height="72.5" fill="#ebdff2" />
<text x="380.53" y="776.8" font-size="16.5" fill="#2b2b2b" textLength="10.11" lengthAdjust="spacingAndGlyphs">S</text>
<text x="390.68" y="787.5" font-size="16" fill="#2b2b2b" textLength="9.25" lengthAdjust="spacingAndGlyphs">ɑ</text>
<rect x="405" y="769.3" width="9" height="1.35" fill="#444" />
<rect x="405" y="773.65" width="9" height="1.35" fill="#444" />
<text x="418.70" y="776.8" font-size="16.5" fill="#2b2b2b" textLength="10.67" lengthAdjust="spacingAndGlyphs">S</text>
<text x="429.75" y="787.25" font-size="16" fill="#2b2b2b" textLength="8.25" lengthAdjust="spacingAndGlyphs">y</text>
<line x1="444" y1="773" x2="448.8" y2="773" stroke="#2b2b2b" stroke-width="1.4" />
<text x="453.99" y="776.8" font-size="16.5" fill="#2b2b2b" textLength="10.95" lengthAdjust="spacingAndGlyphs">S</text>
<text x="463.83" y="787.5" font-size="16" fill="#2b2b2b" textLength="15.65" lengthAdjust="spacingAndGlyphs">m</text>
<rect x="483.75" y="769.3" width="9.0" height="1.35" fill="#444" />
<rect x="483.75" y="773.65" width="9.0" height="1.35" fill="#444" />
<text x="497.94" y="776.95" font-size="16" fill="#2b2b2b" textLength="78.44" lengthAdjust="spacingAndGlyphs">24.126 ksi</text>
<line x1="378.5" y1="734.5" x2="578.2" y2="734.5" stroke="#7777ff" stroke-width="3" stroke-dasharray="6 3"/>
<line x1="380" y1="738.6" x2="380" y2="809" stroke="#7777ff" stroke-width="3" stroke-dasharray="6 3"/>
<line x1="576.7" y1="802.8" x2="576.7" y2="734" stroke="#7777ff" stroke-width="3" stroke-dasharray="6 3"/>
<line x1="578" y1="807.5" x2="378.5" y2="807.5" stroke="#7777ff" stroke-width="3" stroke-dasharray="6 3"/>
<rect x="680.1" y="735.1" width="3.8" height="70.9" fill="#a6a6a6" />
<rect x="683.9" y="735.1" width="79.7" height="70.9" fill="#b0cfea" />
<rect x="763.6" y="735.1" width="62.3" height="70.9" fill="#b5c8e8" />
<text x="685.84" y="788.05" font-size="16" fill="#2b2b2b" textLength="24.00" lengthAdjust="spacingAndGlyphs">crit</text>
<rect x="715" y="768.9" width="8.9" height="1.35" fill="#666" />
<rect x="715" y="773.75" width="8.9" height="1.35" fill="#666" />
<line x1="731" y1="771.4" x2="761" y2="771.4" stroke="#111" stroke-width="1.4" />
<text x="736.22" y="751.3" font-size="16.5" fill="#2b2b2b" textLength="10.33" lengthAdjust="spacingAndGlyphs">S</text>
<text x="746.43" y="762.15" font-size="16" fill="#2b2b2b" textLength="10.20" lengthAdjust="spacingAndGlyphs">ɑ</text>
<text x="733.92" y="793.0" font-size="16.5" fill="#2b2b2b" textLength="10.33" lengthAdjust="spacingAndGlyphs">S</text>
<text x="743.88" y="802.25" font-size="16" fill="#2b2b2b" textLength="14.95" lengthAdjust="spacingAndGlyphs">m</text>
<rect x="768.7" y="769" width="9.2" height="1.35" fill="#555" />
<rect x="768.7" y="773.65" width="9.2" height="1.35" fill="#555" />
<text x="782.46" y="776.65" font-size="16" fill="#2b2b2b" textLength="43.55" lengthAdjust="spacingAndGlyphs">0.403</text>
<rect x="680.4" y="807.6" width="298.1" height="39.0" fill="#fff" stroke="#cfcfcf" stroke-width="2"/>
<rect x="897" y="808.6" width="80.5" height="37.0" fill="#f3f3f3" />
<rect x="681.2" y="808.4" width="29.7" height="37.0" fill="#1463ff" />
<rect x="691.6" y="825.2" width="10.0" height="1.6" fill="#fff" />
<rect x="691.6" y="830.2" width="10.0" height="1.6" fill="#fff" />
<text x="716.68" y="833.22" font-size="18" fill="#222" textLength="157.41" lengthAdjust="spacingAndGlyphs">r_crit=S_ɑ / S_m</text>
<rect x="878" y="814.4" width="2.4" height="25.2" fill="#000" />
<rect x="906" y="825.6" width="10.6" height="1.35" fill="#222" />
<rect x="906" y="830.65" width="10.6" height="1.35" fill="#222" />
<text x="917.90" y="833.66" font-size="18" fill="#222" textLength="56.01" lengthAdjust="spacingAndGlyphs">0.403</text>
<rect x="980" y="735.1" width="58.9" height="71.6" fill="#dbeaf2" />
<rect x="1038.9" y="735.1" width="63.1" height="71.6" fill="#ebdff2" />
<text x="979.66" y="777.15" font-size="16" fill="#2b2b2b" textLength="5.01" lengthAdjust="spacingAndGlyphs">r</text>
<rect x="990.9" y="769" width="9.1" height="1.35" fill="#555" />
<rect x="990.9" y="773.9499999999999" width="9.1" height="1.35" fill="#555" />
<line x1="1006.9" y1="771.3" x2="1036" y2="771.3" stroke="#111" stroke-width="1.4" />
<text x="1012.11" y="751.2" font-size="16" fill="#2b2b2b" textLength="9.71" lengthAdjust="spacingAndGlyphs">σ</text>
<text x="1021.73" y="760.65" font-size="16" fill="#2b2b2b" textLength="10.20" lengthAdjust="spacingAndGlyphs">ɑ</text>
<text x="1009.81" y="792.4" font-size="16" fill="#2b2b2b" textLength="9.71" lengthAdjust="spacingAndGlyphs">σ</text>
<text x="1019.51" y="802.25" font-size="16" fill="#2b2b2b" textLength="14.49" lengthAdjust="spacingAndGlyphs">m</text>
<rect x="1044" y="769" width="8.6" height="1.35" fill="#555" />
<rect x="1044" y="773.9499999999999" width="8.6" height="1.35" fill="#555" />
<text x="1057.76" y="776.25" font-size="16" fill="#2b2b2b" textLength="42.93" lengthAdjust="spacingAndGlyphs">0.667</text>
</svg></body></html>
